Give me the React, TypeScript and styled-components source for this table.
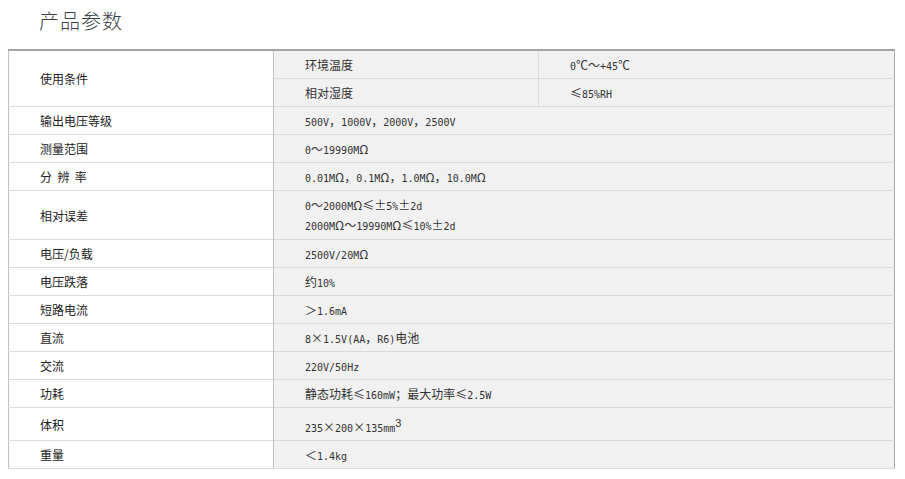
import React from "react";
import styled, { createGlobalStyle } from "styled-components";

const Global = createGlobalStyle`
  html, body { margin: 0; padding: 0; background: #ffffff; }
  body { font-family: "Noto Sans CJK SC", "Noto Sans", sans-serif; color: #333; }
`;

const Page = styled.div`
  width: 905px;
  padding: 0 0 0 8px;
  box-sizing: border-box;
`;

const Title = styled.h2`
  margin: 0 0 14px 31px;
  padding-top: 6px;
  font-size: 20px;
  line-height: 29px;
  font-weight: 300;
  color: #3a3f48;
  letter-spacing: 1px;
`;

const Table = styled.table`
  width: 886px;
  table-layout: fixed;
  border-collapse: collapse;
  border-top: 2px solid #a3a3a3;
  border-left: 1px solid #c6bfbf;
  border-right: 1px solid #a9a9a9;
  font-size: 12px;
`;

const Col = styled.col<{ $w: number }>`
  width: ${(p) => p.$w}px;
`;

const Row = styled.tr`
  border-bottom: 1px solid #dcdcdc;
`;

const LabelCell = styled.td`
  background: #ffffff;
  border-right: 1px solid #c6bfbf;
  padding: 4px 0 4px 31px;
  line-height: 19px;
  color: #222;
  vertical-align: middle;
  white-space: pre;
`;

const ValueCell = styled.td<{ $split?: boolean; $tall?: boolean }>`
  background: #f1f1f1;
  padding: ${(p) => (p.$tall ? "9px" : "4px")} 0 4px 31px;
  line-height: 19px;
  color: #333;
  vertical-align: middle;
  border-right: ${(p) => (p.$split ? "1px solid #dcdcdc" : "none")};
  white-space: nowrap;
`;

const Line = styled.div`
  line-height: 20px;
`;

const Latin = styled.span`
  font-family: "DejaVu Sans Mono", "Liberation Mono", monospace;
  font-size: 10px;
  line-height: 10px;
`;

const Sup = styled.sup`
  font-family: "Liberation Sans", sans-serif;
  font-size: 11px;
  line-height: 0;
`;

function T({ text }: { text: string }) {
  const parts = text.split(/([\x21-\x7E]+)/);
  return (
    <>
      {parts.map((p, i) =>
        i % 2 === 1 ? <Latin key={i}>{p}</Latin> : <React.Fragment key={i}>{p}</React.Fragment>
      )}
    </>
  );
}

const rows: { label: string; value: string[]; sup?: string }[] = [
  { label: "输出电压等级", value: ["500V，1000V，2000V，2500V"] },
  { label: "测量范围", value: ["0～19990MΩ"] },
  { label: "分  辨  率", value: ["0.01MΩ，0.1MΩ，1.0MΩ，10.0MΩ"] },
  { label: "相对误差", value: ["0～2000MΩ≤±5%±2d", "2000MΩ～19990MΩ≤10%±2d"] },
  { label: "电压/负载", value: ["2500V/20MΩ"] },
  { label: "电压跌落", value: ["约10%"] },
  { label: "短路电流", value: ["＞1.6mA"] },
  { label: "直流", value: ["8×1.5V(AA，R6)电池"] },
  { label: "交流", value: ["220V/50Hz"] },
  { label: "功耗", value: ["静态功耗≤160mW；最大功率≤2.5W"] },
  { label: "体积", value: ["235×200×135mm"], sup: "3" },
  { label: "重量", value: ["＜1.4kg"] },
];

export default function App() {
  return (
    <Page>
      <Global />
      <Title>产品参数</Title>
      <Table>
        <colgroup>
          <Col $w={265} />
          <Col $w={265} />
          <Col $w={356} />
        </colgroup>
        <tbody>
          <Row>
            <LabelCell rowSpan={2}>使用条件</LabelCell>
            <ValueCell $split>环境温度</ValueCell>
            <ValueCell>
              <T text="0℃～+45℃" />
            </ValueCell>
          </Row>
          <Row>
            <ValueCell $split>相对湿度</ValueCell>
            <ValueCell>
              <T text="≤85%RH" />
            </ValueCell>
          </Row>
          {rows.map((r) => (
            <Row key={r.label}>
              <LabelCell>{r.label}</LabelCell>
              <ValueCell colSpan={2} $tall={!!r.sup}>
                {r.value.length > 1 ? (
                  r.value.map((v) => (
                    <Line key={v}>
                      <T text={v} />
                    </Line>
                  ))
                ) : (
                  <>
                    <T text={r.value[0]} />
                    {r.sup && <Sup>{r.sup}</Sup>}
                  </>
                )}
              </ValueCell>
            </Row>
          ))}
        </tbody>
      </Table>
    </Page>
  );
}
